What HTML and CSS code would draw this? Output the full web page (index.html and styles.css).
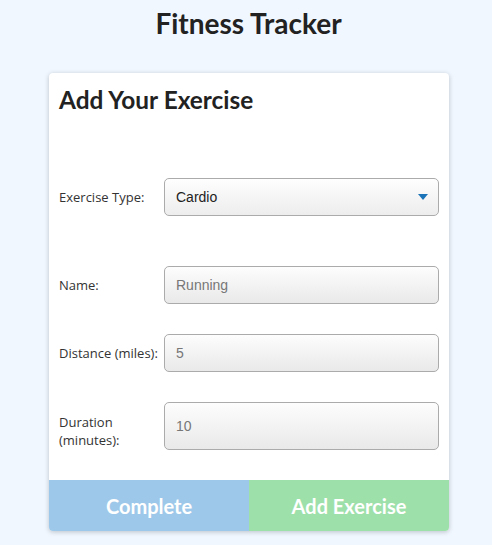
FILE: index.html
```html
<!DOCTYPE html>
<html>
<head>
<meta charset="utf-8">
<link rel="stylesheet" href="styles.css">
</head>
<body>
<h1 class="title">Fitness Tracker</h1>
<div class="card">
  <h2 class="card-title">Add Your Exercise</h2>
  <div class="row row-type">
    <label class="label">Exercise Type:</label>
    <div class="field select">
      <span class="value">Cardio</span>
      <svg class="caret" width="10" height="6" viewBox="0 0 10 6"><path d="M0 0H10L5 6Z" fill="#1b74b8"/></svg>
    </div>
  </div>
  <div class="row row-name">
    <label class="label">Name:</label>
    <div class="field"><span class="value muted">Running</span></div>
  </div>
  <div class="row row-dist">
    <label class="label">Distance (miles):</label>
    <div class="field"><span class="value muted">5</span></div>
  </div>
  <div class="row row-dur">
    <label class="label label-dur">Duration (minutes):</label>
    <div class="field tall"><span class="value muted">10</span></div>
  </div>
  <div class="actions">
    <button class="btn btn-complete">Complete</button>
    <button class="btn btn-add">Add Exercise</button>
  </div>
</div>
</body>
</html>
```

FILE: styles.css
```css
html, body {
  margin: 0;
  padding: 0;
}
body {
  background: #f0f7ff;
  font-family: Lato, "Open Sans", sans-serif;
  color: #222;
  width: 492px;
  height: 545px;
  overflow: hidden;
}
.title {
  margin: 6px 0 0 0;
  padding-left: 5px;
  text-align: center;
  font-family: Lato, sans-serif;
  font-weight: 700;
  font-size: 28px;
  line-height: 34px;
  color: #222;
}
.card {
  margin: 33px 0 0 49px;
  width: 400px;
  background: #fff;
  border-radius: 4px;
  box-shadow: 0 1px 5px rgba(0, 0, 0, 0.22);
  overflow: hidden;
}
.card-title {
  margin: 0;
  padding: 13px 0 0 10px;
  font-family: Lato, sans-serif;
  font-weight: 700;
  font-size: 24.4px;
  line-height: 28px;
  color: #222;
}
.row {
  display: flex;
  align-items: center;
  padding: 0 10px 0 10px;
}
.row-type { margin-top: 64px; }
.row-name { margin-top: 50px; }
.row-dist { margin-top: 30px; }
.row-dur { margin-top: 30px; }
.label {
  width: 105px;
  flex: none;
  font-family: "Open Sans", sans-serif;
  font-size: 13px;
  line-height: 18px;
  color: #333;
}
.label-dur { padding-top: 10px; }
.field {
  flex: 1;
  height: 36px;
  box-sizing: content-box;
  border: 1px solid #ababab;
  border-radius: 5px;
  background: linear-gradient(#fdfdfd, #e9e9e9);
  display: flex;
  align-items: center;
  padding: 0 11px;
  font-family: "Liberation Sans", Arial, sans-serif;
  font-size: 14px;
}
.field.tall { height: 46px; }
.select {
  justify-content: space-between;
  background: linear-gradient(#fefefe, #ededed);
}
.value { color: #222; }
.value.muted { color: #777; }
.caret { margin-right: -1px; }
.actions {
  display: flex;
  margin-top: 30px;
}
.btn {
  flex: 1;
  height: 51px;
  border: none;
  margin: 0;
  padding: 0;
  font-family: Lato, sans-serif;
  font-weight: 700;
  font-size: 20px;
  color: #fff;
}
.btn-complete { background: #9ec8e9; }
.btn-add { background: #9ee0aa; }
```
